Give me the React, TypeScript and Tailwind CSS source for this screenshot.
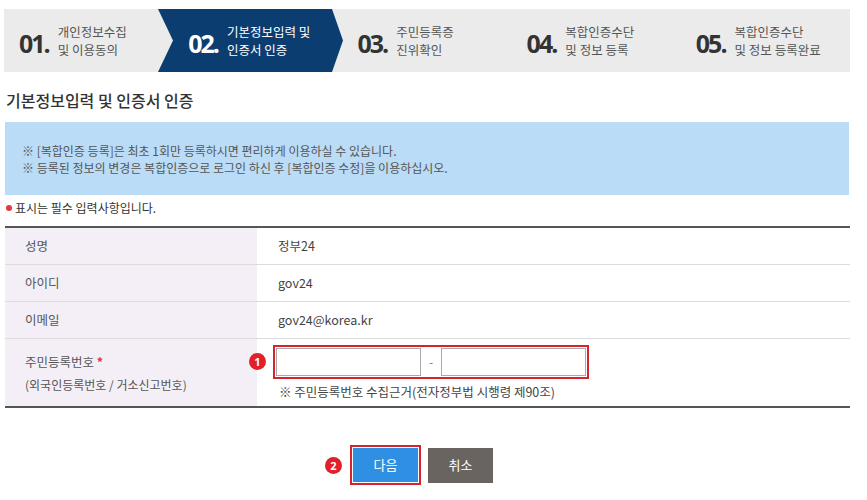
const KR = '"Noto Sans CJK KR", "Noto Sans", sans-serif';

const steps = [
  { no: "01.", a: "개인정보수집", b: "및 이용동의" },
  { no: "02.", a: "기본정보입력 및", b: "인증서 인증", active: true },
  { no: "03.", a: "주민등록증", b: "진위확인" },
  { no: "04.", a: "복합인증수단", b: "및 정보 등록" },
  { no: "05.", a: "복합인증수단", b: "및 정보 등록완료" },
];

function Badge({ n }: { n: number }) {
  return (
    <span className="flex h-[17px] w-[17px] items-center justify-center rounded-full bg-[#e3202a] text-[11px] font-bold leading-none text-white" style={{ fontFamily: '"Open Sans", sans-serif' }}>
      {n}
    </span>
  );
}

function Row({ label, children, tall }: { label: React.ReactNode; children: React.ReactNode; tall?: boolean }) {
  return (
    <div className={`flex border-b border-[#dcdcdc] last:border-b-0 ${tall ? "h-[67px]" : "h-[37px]"}`}>
      <div className="flex w-[252px] shrink-0 flex-col justify-center bg-[#f4eff6] pl-[20px] text-[12.5px] text-[#555]">{label}</div>
      <div className="flex flex-1 items-center pl-[21px] text-[12.5px] text-[#444]">{children}</div>
    </div>
  );
}

export default function App() {
  return (
    <div className="h-[500px] w-[867px] overflow-hidden bg-white" style={{ fontFamily: KR }}>
      {/* step bar */}
      <div className="ml-[4px] mt-[9px] flex h-[63px] w-[846px] bg-[#ebebeb]">
        {steps.map((s) => (
          <div key={s.no} className="relative flex flex-1 items-center pl-[15px]">
            {s.active && (
              <svg className="absolute left-[-15px] top-0 h-[63px] w-[185px]" viewBox="0 0 185 63" preserveAspectRatio="none">
                <polygon points="0,0 174,0 185,31.5 174,63 0,63 15,31.5" fill="#0c3d71" />
              </svg>
            )}
            <span
              className={`relative mt-[6px] text-[25px] font-bold tracking-[-2px] ${s.active ? "text-white" : "text-[#333]"}`}
              style={{ fontFamily: '"Open Sans", sans-serif' }}
            >
              {s.no}
            </span>
            <div className={`relative ml-[9px] text-[12.5px] leading-[18px] ${s.active ? "text-white" : "text-[#555]"}`}>
              <div>{s.a}</div>
              <div>{s.b}</div>
            </div>
          </div>
        ))}
      </div>

      <h2 className="ml-[6px] mt-[18px] h-5 text-[16px] font-medium leading-5 text-[#333]">기본정보입력 및 인증서 인증</h2>

      <div className="ml-[5px] mt-[12px] h-[73px] w-[844px] bg-[#bbdcf6] pl-[17px] pt-[20px] text-[12px] leading-[17px] text-[#555]">
        <p>※ [복합인증 등록]은 최초 1회만 등록하시면 편리하게 이용하실 수 있습니다.</p>
        <p>※ 등록된 정보의 변경은 복합인증으로 로그인 하신 후 [복합인증 수정]을 이용하십시오.</p>
      </div>

      <p className="ml-[6px] mt-[4px] flex items-center text-[12px] leading-[18px] text-[#333]">
        <span className="mr-[3px] inline-block h-[6px] w-[6px] rounded-full bg-[#e8353b]" />
        표시는 필수 입력사항입니다.
      </p>

      <div className="ml-[5px] mt-[9px] w-[845px] border-y-2 border-[#555]">
        <Row label="성명">정부24</Row>
        <Row label="아이디">gov24</Row>
        <Row label="이메일">gov24@korea.kr</Row>
        <Row
          tall
          label={
            <>
              <div className="leading-[20px]">
                주민등록번호 <span className="font-bold text-[#e8353b]">*</span>
              </div>
              <div className="mt-[4px] text-[12px] leading-[18px]">(외국인등록번호 / 거소신고번호)</div>
            </>
          }
        >
          <div className="ml-[-29px] flex flex-col">
            <div className="flex items-center">
              <Badge n={1} />
              <div className="ml-[7px] flex items-center border-2 border-[#d3252b] p-[1px]">
                <div className="h-[28px] w-[145px] border border-[#aaa] bg-white" />
                <span className="w-[20px] text-center text-[12px] text-[#777]">-</span>
                <div className="h-[28px] w-[145px] border border-[#aaa] bg-white" />
              </div>
            </div>
            <div className="ml-[30px] mt-[4px] text-[12.5px] leading-[18px] text-[#444]">※ 주민등록번호 수집근거(전자정부법 시행령 제90조)</div>
          </div>
        </Row>
      </div>

      <div className="ml-[325px] mt-[37px] flex items-center">
        <Badge n={2} />
        <div className="ml-[8px] border-2 border-[#d3252b] p-[1px]">
          <button className="block h-[34px] w-[65px] bg-[#2f8fe3] text-[13px] text-white">다음</button>
        </div>
        <button className="ml-[7px] h-[35px] w-[65px] bg-[#69645f] text-[13px] text-white">취소</button>
      </div>
    </div>
  );
}
